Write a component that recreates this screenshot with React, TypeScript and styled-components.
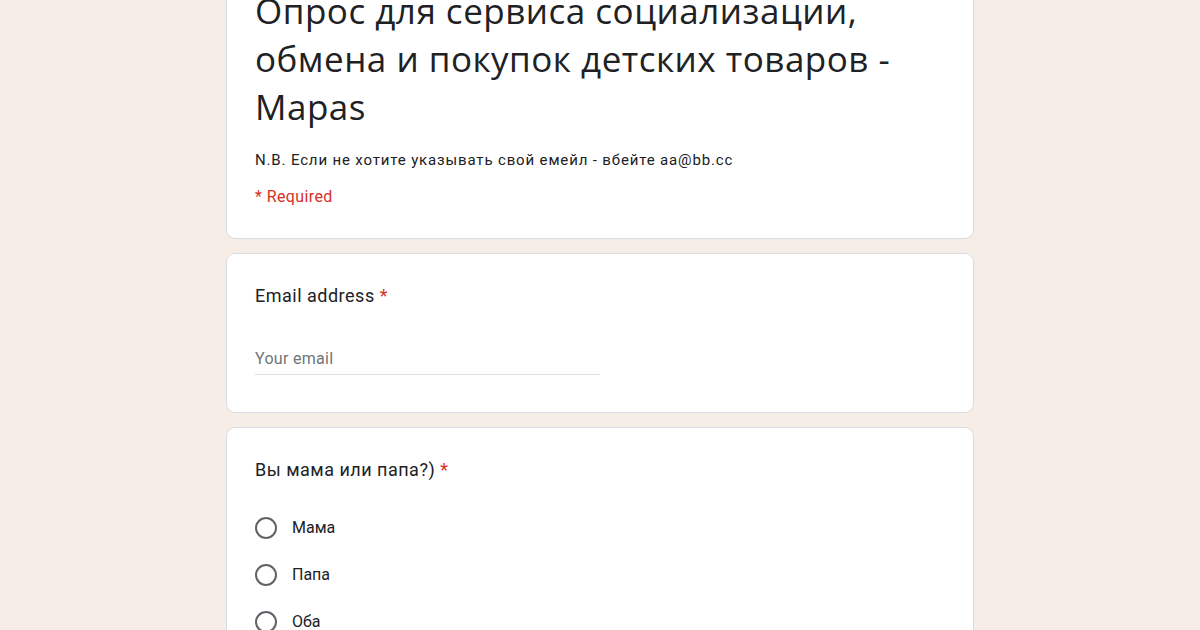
import styled, { createGlobalStyle } from "styled-components";

const GlobalStyle = createGlobalStyle`
  html, body {
    margin: 0;
    padding: 0;
    background: #f6ede7;
    overflow: hidden;
  }
  body {
    font-family: Roboto, "Liberation Sans", Arial, sans-serif;
    color: #202124;
  }
`;

const Page = styled.div`
  width: 748px;
  margin: -26px auto 0;
  display: flex;
  flex-direction: column;
  gap: 14px;
`;

const Card = styled.div<{ $pad: string }>`
  background: #ffffff;
  border: 1px solid #dadce0;
  border-radius: 9px;
  padding: ${(props) => props.$pad};
  display: flex;
  flex-direction: column;
`;

const Title = styled.h1`
  margin: 0;
  font-family: "Open Sans", Roboto, sans-serif;
  font-weight: 400;
  font-size: 35px;
  line-height: 48px;
  letter-spacing: 0.5px;
  color: #202124;
`;

const Description = styled.div`
  margin-top: 19px;
  font-size: 15px;
  line-height: 20px;
  letter-spacing: 0.85px;
  color: #202124;
`;

const Required = styled.div`
  margin-top: 17px;
  font-size: 16px;
  line-height: 20px;
  letter-spacing: 0.4px;
  color: #d93025;
`;

const Label = styled.div`
  font-size: 18px;
  line-height: 24px;
  letter-spacing: 0.5px;
  color: #202124;
`;

const Star = styled.span`
  color: #d93025;
  margin-left: 5px;
`;

const EmailField = styled.div`
  margin-top: 39px;
  width: 345px;
  padding-bottom: 3px;
  border-bottom: 1px solid #e0e0e0;
  font-size: 16px;
  line-height: 24px;
  letter-spacing: 0.3px;
  color: #70757a;
`;

const Options = styled.div`
  margin-top: 34px;
  display: flex;
  flex-direction: column;
  gap: 23px;
`;

const Option = styled.label`
  display: flex;
  align-items: center;
  gap: 15px;
  font-size: 16px;
  line-height: 24px;
  color: #202124;
`;

const Radio = styled.span`
  width: 18px;
  height: 18px;
  border: 2px solid #5f6368;
  border-radius: 50%;
  flex-shrink: 0;
`;

export default function App() {
  const options = ["Мама", "Папа", "Оба"];
  return (
    <>
      <GlobalStyle />
      <Page>
        <Card $pad="12px 28px 31px">
          <Title>
            Опрос для сервиса социализации, обмена и покупок детских товаров -
            Mapas
          </Title>
          <Description>
            N.B. Если не хотите указывать свой емейл - вбейте aa@bb.cc
          </Description>
          <Required>* Required</Required>
        </Card>
        <Card $pad="30px 28px 37px">
          <Label>
            Email address<Star>*</Star>
          </Label>
          <EmailField>Your email</EmailField>
        </Card>
        <Card $pad="30px 28px 30px">
          <Label>
            Вы мама или папа?)<Star>*</Star>
          </Label>
          <Options>
            {options.map((item) => (
              <Option key={item}>
                <Radio />
                {item}
              </Option>
            ))}
          </Options>
        </Card>
      </Page>
    </>
  );
}
